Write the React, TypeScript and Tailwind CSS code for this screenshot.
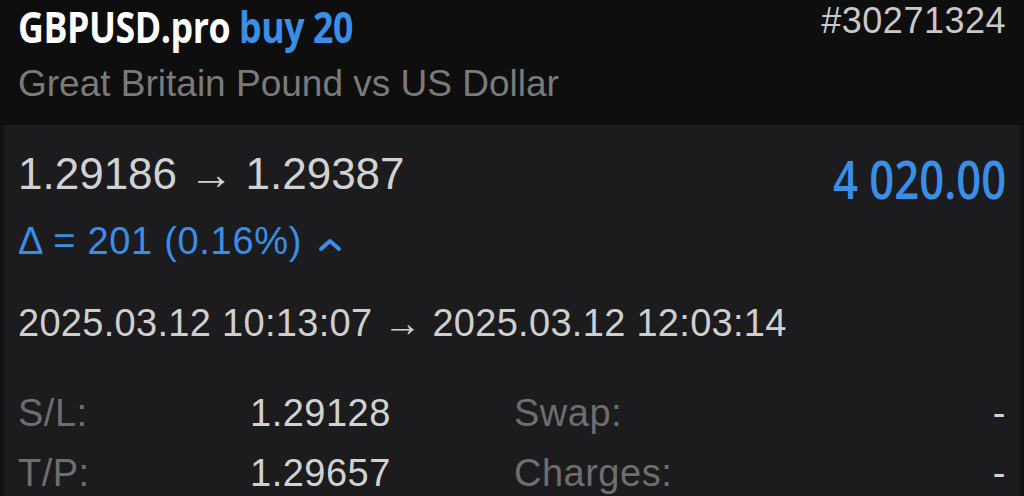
export default function App() {
    return (
        <div className="w-[1024px] h-[496px] overflow-hidden bg-[#1c1c1e] font-['Liberation_Sans',Arial,sans-serif]">
            {/* Header */}
            <div className="h-[125px] bg-[#0e0e0e] px-[18px] pt-[5px]">
                <div className="flex items-start justify-between">
                    <div className="font-['Open_Sans',sans-serif] font-bold text-[43px] leading-none tracking-[-0.5px] inline-block scale-x-[0.83] origin-left whitespace-nowrap">
                        <span className="text-white">GBPUSD.pro</span>{" "}
                        <span className="text-[#3a8ee6]">buy 20</span>
                    </div>
                    <div className="text-[#c8c8c8] text-[36px] leading-none tracking-[0.5px] -mt-[2px]">#30271324</div>
                </div>
                <div className="text-[#7a7a7a] text-[37px] leading-none mt-[17px]">Great Britain Pound vs US Dollar</div>
            </div>

            {/* Body */}
            <div className="h-[371px] border-x-[4px] border-[#131314] px-[14px] pt-[27px]">
                <div className="flex items-start justify-between h-[44px]">
                    <div className="text-[#d2d2d2] text-[44px] leading-none">1.29186 → 1.29387</div>
                    <div className="font-['Open_Sans',sans-serif] font-semibold text-[52px] leading-none text-[#3a8ee6] mt-[1px] inline-block scale-x-[0.84] origin-right">4 020.00</div>
                </div>
                <div className="flex items-center gap-[16px] text-[#3a8ee6] text-[38px] leading-none tracking-[0.7px] mt-[26px]">
                    <span>Δ = 201 (0.16%)</span>
                    <svg width="24" height="15" viewBox="0 0 24 15" className="mt-[6px]">
                        <path d="M3 12 L12 4 L21 12" fill="none" stroke="#3a8ee6" strokeWidth="4" strokeLinecap="round" strokeLinejoin="round" />
                    </svg>
                </div>
                <div className="text-[#cfcfcf] text-[38px] leading-none tracking-[0.3px] mt-[44px]">2025.03.12 10:13:07 → 2025.03.12 12:03:14</div>

                <div className="grid grid-cols-[232px_264px_1fr_auto] text-[38px] leading-none tracking-[0.5px] mt-[52px] gap-y-[22px]">
                    <span className="text-[#6e6e6e]">S/L:</span>
                    <span className="text-[#d2d2d2]">1.29128</span>
                    <span className="text-[#6e6e6e]">Swap:</span>
                    <span className="text-[#d2d2d2]">-</span>
                    <span className="text-[#6e6e6e]">T/P:</span>
                    <span className="text-[#d2d2d2]">1.29657</span>
                    <span className="text-[#6e6e6e]">Charges:</span>
                    <span className="text-[#d2d2d2]">-</span>
                </div>
            </div>
        </div>
    );
}
